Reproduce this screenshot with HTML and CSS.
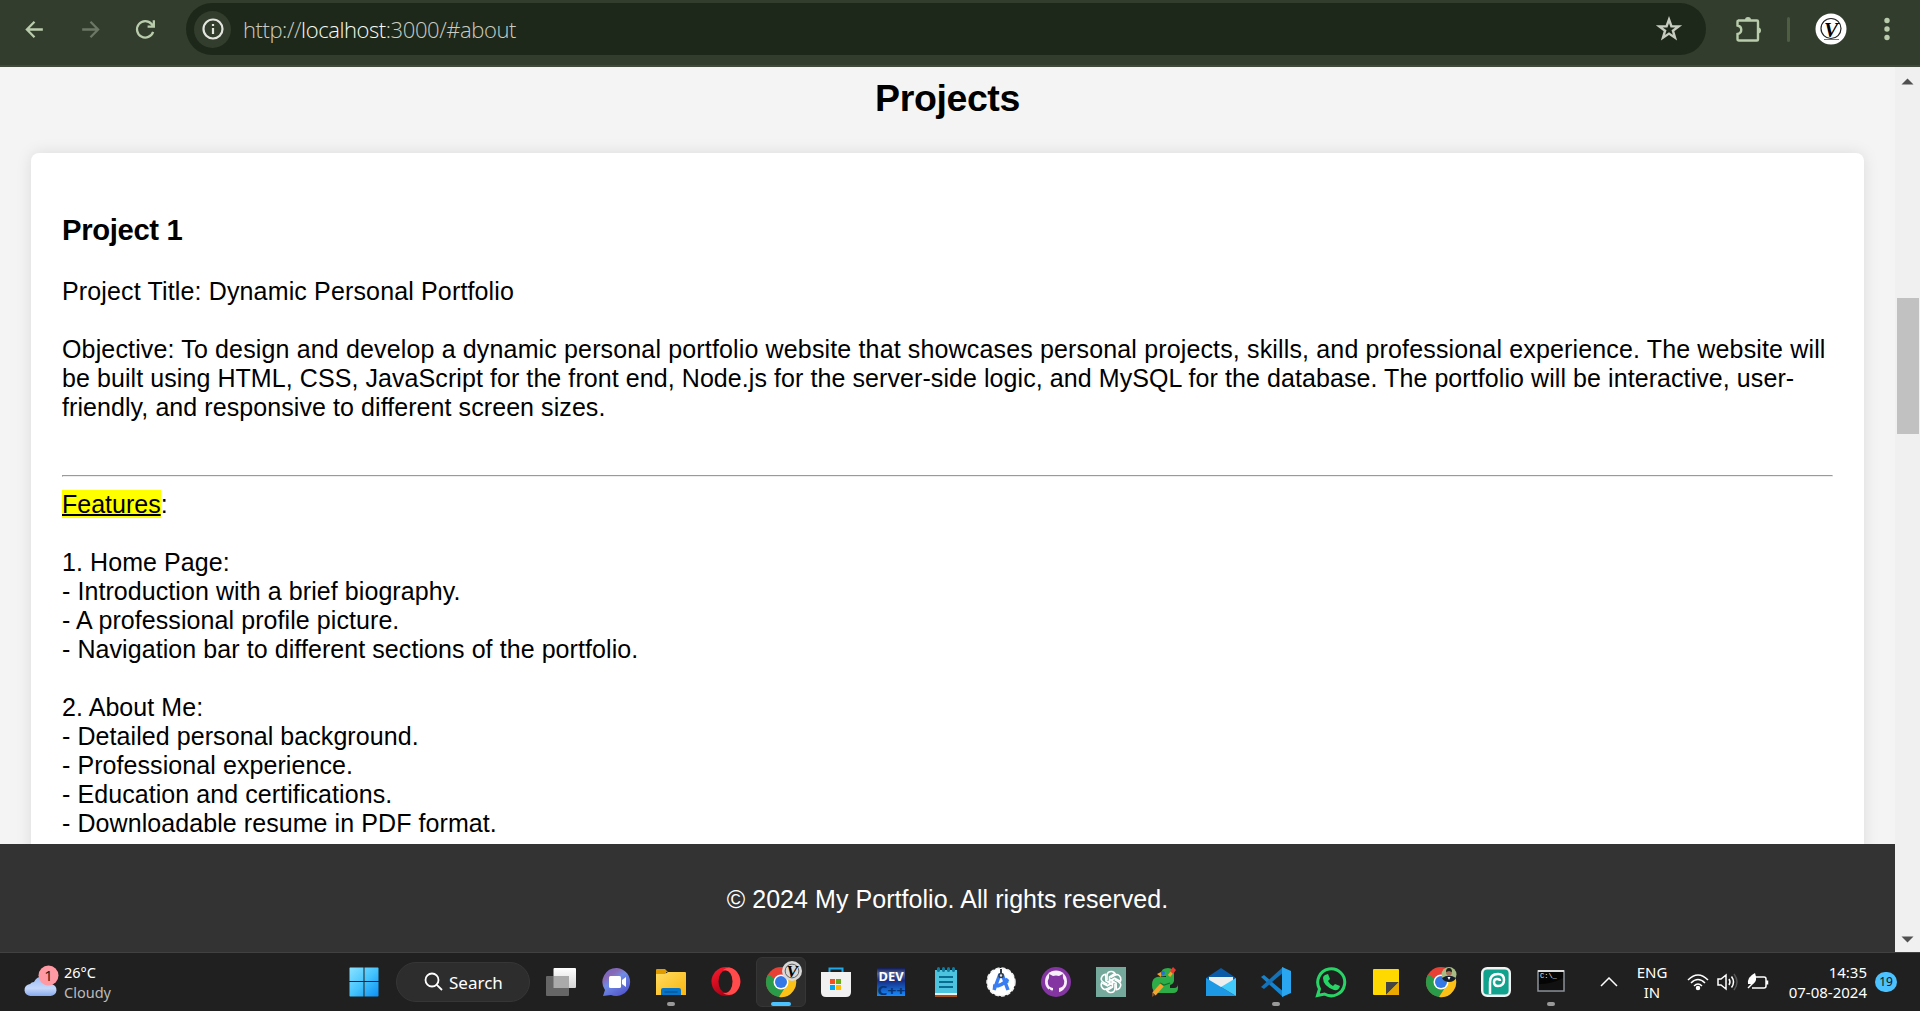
FILE: index.html
```html
<!DOCTYPE html>
<html lang="en">
<head>
<meta charset="utf-8">
<title>My Portfolio</title>
<link rel="stylesheet" href="styles.css">
</head>
<body>
<header class="toolbar">
  <svg class="nav" viewBox="0 0 24 24"><path d="M20 12H5M12 4.500 4.700 12 12 19.500"/></svg>
  <svg class="nav dim" viewBox="0 0 24 24"><path d="M4 12h15M12 4.500l7.300 7.500L12 19.500"/></svg>
  <svg class="nav" viewBox="0 0 24 24"><path d="M19.300 14.200A7.900 7.900 0 1 1 17.800 6.700L20 9M20 3.200V9.200H14"/></svg>
  <div class="omnibox">
    <span class="info"><svg width="24" height="24" viewBox="0 0 24 24"><circle cx="12" cy="12" r="9.500"/><path d="M12 11v6M12 7v2"/></svg></span>
    <span class="url"><span class="scheme">http://</span><span class="host">localhost</span><span class="path">:3000/#about</span></span>
    <svg class="star" width="28" height="28" viewBox="0 0 28 28"><path d="M14 4.500l2.400 6.700 7.300.2-5.800 4.300 2.100 7-6-4.100-6 4.100 2.100-7-5.800-4.300 7.300-.2z"/></svg>
  </div>
  <svg class="ext" width="28" height="28" viewBox="0 0 28 28"><path d="M4 5.500h19a1 1 0 0 1 1 1v18a1 1 0 0 1-1 1H5a1.500 1.500 0 0 1-1.500-1.500v-5c5-1 5-7.500 0-8.500v-4a1 1 0 0 1 1-1z"/><path class="knob" d="M11 5a3 3 0 0 1 6 0zM24 12.500a3 3 0 0 1 0 6z"/></svg>
  <span class="divider"></span>
  <svg class="avatar" width="32" height="32" viewBox="0 0 32 32"><circle cx="16" cy="16" r="15.500" fill="#fff"/><circle cx="16" cy="15.500" r="10" fill="none" stroke="#222" stroke-width="1.200"/><text x="16" y="24" text-anchor="middle">V</text><path d="M9 26.500h15" stroke="#777"/></svg>
  <svg class="dots" width="8" height="24" viewBox="0 0 8 24"><circle cx="4" cy="3.500" r="2.700"/><circle cx="4" cy="12" r="2.700"/><circle cx="4" cy="20.500" r="2.700"/></svg>
</header>
<div class="viewport">
  <div class="page">
    <main class="content">
      <h2>Projects</h2>
      <article class="card">
        <h3>Project 1</h3>
        <p><span class="wide">Project Title: Dynamic Personal Portfolio</span><br><br><span class="wide">Objective: To design and develop a dynamic personal portfolio website that showcases personal projects, skills, and professional experience. The website will</span><br>be built using HTML, CSS, JavaScript for the front end, Node.js for the server-side logic, and MySQL for the database. The portfolio will be interactive, user-<br>friendly, and responsive to different screen sizes.</p>
        <hr>
        <p><mark>Features</mark>:<br><br>1. Home Page:<br>- Introduction with a brief biography.<br>- A professional profile picture.<br>- Navigation bar to different sections of the portfolio.<br><br>2. About Me:<br>- Detailed personal background.<br>- Professional experience.<br>- Education and certifications.<br>- Downloadable resume in PDF format.</p>
      </article>
    </main>
    <footer>© 2024 My Portfolio. All rights reserved.</footer>
  </div>
  <aside class="scrollbar">
    <svg width="13" height="7" viewBox="0 0 13 7"><path d="M.5 6.500 6.500.5l6 6z"/></svg>
    <div class="thumb"></div>
    <svg width="13" height="7" viewBox="0 0 13 7"><path d="M.5.500l6 6 6-6z"/></svg>
  </aside>
</div>
<nav class="taskbar">
  <div class="weather">
    <svg width="36" height="34" viewBox="0 0 36 34">
      <defs><linearGradient id="cloud" x2="0" y2="1"><stop stop-color="#9bbcf5"/><stop offset=".6" stop-color="#c5d8fb"/><stop offset="1" stop-color="#86a9ec"/></linearGradient></defs>
      <path d="M7 31a6 6 0 0 1-1-12 5 5 0 0 1 4-2 9 9 0 0 1 17 2 6 6 0 0 1-1 12z" fill="url(#cloud)"/>
      <circle cx="24.500" cy="10.500" r="10" fill="#ff99a4"/><text x="24.500" y="15.500" text-anchor="middle">1</text>
    </svg>
    <div class="lines"><span class="temp">26°C</span><span class="cond">Cloudy</span></div>
  </div>
  <svg class="start" width="30" height="30" viewBox="0 0 30 30"><defs><linearGradient id="win" x2="1" y2="1"><stop stop-color="#8be3ff"/><stop offset=".5" stop-color="#45c4fd"/><stop offset="1" stop-color="#0b90f5"/></linearGradient></defs><path fill="url(#win)" d="M1 .5h13.500V14H.5V1zM15.500.5H29l.5.500v13h-14zM.5 15h14v14.500H1L.5 29zM15.500 15h14v14l-.5.500H15.500z"/></svg>
  <div class="search"><svg width="20" height="20" viewBox="0 0 20 20"><circle cx="8" cy="8" r="6.500"/><path d="M12.800 12.800 18 18"/></svg><span>Search</span></div>
  <div class="apps">
    <span class="app"><svg viewBox="0 0 32 32"><defs><linearGradient id="tv" x2="0" y2="1"><stop stop-color="#fff"/><stop offset="1" stop-color="#d5d5d5"/></linearGradient></defs><rect x="8.500" y="2" width="22.500" height="20" rx="1" fill="url(#tv)"/><rect x="1" y="10" width="23" height="20" rx="1" fill="#666"/><path d="M8.500 10H24v12H8.500z" fill="#aaa"/></svg></span>
    <span class="app"><svg viewBox="0 0 32 32"><defs><linearGradient id="chat" x2=".7" y2="1"><stop stop-color="#6168cf"/><stop offset=".3" stop-color="#8a68b4"/><stop offset=".5" stop-color="#6f8ce6"/><stop offset="1" stop-color="#5356cb"/></linearGradient></defs><path d="M17 2a14 14 0 1 1-6 27l-8 1 2-6A14 14 0 0 1 17 2z" fill="url(#chat)"/><rect x="9" y="10" width="12" height="12" rx="1.500" fill="#fff"/><path d="M22 14l4-3v10l-4-3z" fill="#fff"/></svg></span>
    <span class="app open"><svg viewBox="0 0 32 32"><defs><linearGradient id="fold" x2="1" y2="1"><stop stop-color="#ffdb62"/><stop offset="1" stop-color="#f9b60c"/></linearGradient></defs><path d="M1 4q0-1 1-1h8l3 3h-2v5H1z" fill="#df9b00"/><path d="M1 8h9l3-2h17q1 0 1 1v22H1z" fill="url(#fold)"/><path d="M6 29v-5q0-2 2-2h16q2 0 2 2v5z" fill="#0874c8"/><path d="M9.500 26h13" stroke="#034a83"/></svg></span>
    <span class="app"><svg viewBox="0 0 32 32"><defs><linearGradient id="op" x2=".5" y2="1"><stop stop-color="#ff1b2d"/><stop offset="1" stop-color="#a70014"/></linearGradient></defs><circle cx="16" cy="15.500" r="14.500" fill="url(#op)"/><path d="M13 4q6-5 12 0a15 15 0 0 1 0 23q-6 4-12 0 9 1 9-12Q22 4 13 4z" fill="#ff4b4b"/><ellipse cx="15.500" cy="15.500" rx="7" ry="11" fill="#202020"/></svg></span>
    <span class="app active"><svg viewBox="0 0 32 32"><g id="chrome"><circle cx="16" cy="16" r="15" fill="#e74034"/><path d="M16 16 3 8.500A15 15 0 0 0 14 31l6-9z" fill="#299b49"/><path d="M16 9h13.300A15 15 0 0 1 14 31l7-11z" fill="#fbc116"/><circle cx="16" cy="16" r="7.500" fill="#fff"/><circle cx="16" cy="16" r="6" fill="#3478e5"/></g></svg><svg class="profile" viewBox="0 0 32 32"><circle cx="16" cy="16" r="16" fill="#d8d8d8"/><circle cx="16" cy="16" r="11" fill="none" stroke="#555" stroke-width="1.500"/><text x="16" y="25" text-anchor="middle">V</text></svg></span>
    <span class="app"><svg viewBox="0 0 32 32"><path d="M9.500 8V2.500h13V8" fill="none" stroke="#21a8e8" stroke-width="2"/><path d="M1 6h30v20q0 5-5 5H6q-5 0-5-5z" fill="#f1f1f1"/><path d="M10 13h5v5h-5z" fill="#f25022"/><path d="M16 13h5v5h-5z" fill="#68ad16"/><path d="M10 19h5v5h-5z" fill="#00a4ef"/><path d="M16 19h5v5h-5z" fill="#ffb900"/></svg></span>
    <span class="app"><svg class="dev" viewBox="0 0 32 32"><defs><linearGradient id="dev" x2="0" y2="1"><stop stop-color="#101b56"/><stop offset=".2" stop-color="#526599"/><stop offset=".45" stop-color="#172c83"/><stop offset="1" stop-color="#168cff"/></linearGradient></defs><path d="M2 2h28v28H2z" fill="url(#dev)"/><text x="3.500" y="14.500" textLength="25" lengthAdjust="spacingAndGlyphs" fill="#fff">DEV</text><text x="2.500" y="28.500" textLength="28" lengthAdjust="spacingAndGlyphs" fill="#063474">C++</text></svg></span>
    <span class="app"><svg viewBox="0 0 32 32"><path d="M5 4h22v25H5z" fill="#4dc4df"/><path d="M5 27h22v2H5z" fill="#eee"/><path d="M5 29h22v2H5z" fill="#a34f18"/><path d="M9 11h14M9 16h14M9 21h14" stroke="#086d91" stroke-width="2"/><path d="M8.500 2.500v2M13.500 2.500v2M18.500 2.500v2M23.500 2.500v2" stroke="#137a9b" stroke-width="3" stroke-linecap="round"/></svg></span>
    <span class="app"><svg viewBox="0 0 32 32"><circle cx="16" cy="16" r="14" fill="#fff" stroke="#eee" stroke-width="1.500" stroke-dasharray="4 2"/><path d="M20 12l4 4-4 3z" fill="#29a854"/><path d="M15 8 9 24M17 8l6 16M8 20q8 1 15-7" fill="none" stroke="#387df1" stroke-width="3.500"/><circle cx="16" cy="9.500" r="2" fill="#ddd" stroke="#303c4c" stroke-width="1.500"/><path d="M16 3v4" stroke="#303c4c" stroke-width="2"/></svg></span>
    <span class="app"><svg viewBox="0 0 32 32"><circle cx="16" cy="16" r="15" fill="#8435a1"/><circle cx="16" cy="15.500" r="11" fill="#f6effa"/><path d="M13 28v-6q-4-.5-5-4-1-3 1-6l.2-4 3.800 2q3-1 6 0l3.800-2 .2 4q2 3 1 6-1 3.500-5 4v6z" fill="#8435a1"/><path d="M13 25q-3 .8-4-2" fill="none" stroke="#8435a1" stroke-width="1.500"/></svg></span>
    <span class="app"><svg viewBox="0 0 32 32"><path d="M1 1h30v30H1z" fill="#74a99b"/><g transform="translate(16 16)" fill="none" stroke="#fff" stroke-width="1.600"><g id="petals"><path id="petal" d="M-4-1.800V-6Q-4-11 1-10.500 3-10 4-8.500L-1.500-5V3"/><use href="#petal" transform="rotate(60)"/><use href="#petal" transform="rotate(120)"/></g><use href="#petals" transform="rotate(180)"/></g></svg></span>
    <span class="app"><svg viewBox="0 0 32 32"><path d="M11 8q0-6 7-6 6 0 6 6v7q-1 4-5 4h-7q-2 1-2 3h14q4 0 4-4v4q0 5-5 5H7q-5-1-5-8 0-7 5-8 4-1 9 0v-1h-5z" fill="#2eac48"/><path d="M10 15h10v9H10z" fill="#2eac48"/><path d="m7 8 4-2v5z" fill="#f0a02c"/><path d="m10 17 4 2 6-2" stroke="#13702d" stroke-width="1.200" fill="none"/><circle cx="13" cy="7" r="2" fill="#246fdd"/><path d="m19 10 4-5" stroke="#f6a42c" stroke-width="3"/><path d="M4 28l8-9" stroke="#f6a42c" stroke-width="4.500"/><path d="m20 5 3-4 3 3-3 4z" fill="#e63a31"/><path d="m2 26 3 3-3 2z" fill="#79502e"/></svg></span>
    <span class="app"><svg viewBox="0 0 32 32"><path d="M1 12 16 2l15 10v6H1z" fill="#0b5aa8"/><path d="M4 11h24v10H4z" fill="#eee"/><path d="M1 12v18h30L16 21z" fill="#1c98e4"/><path d="M31 12v18L16 21z" fill="#42cafa"/></svg></span>
    <span class="app open"><svg viewBox="0 0 32 32"><path d="M1 11l3-2 21 18-2 4z" fill="#1683ce"/><path d="M1 21l3 2L25 5l-2-4z" fill="#1372b8"/><path d="M22 1 31 5v22l-9 4z" fill="#29a6ef"/></svg></span>
    <span class="app"><svg viewBox="0 0 32 32"><path d="M2.500 29.500 4.500 23A13.500 13.500 0 1 1 9.500 28z" fill="none" stroke="#28d466" stroke-width="3"/><path d="M10 9l3-1 2 5-2 2q2 4 5 5l2-2 5 2q-1 5-6 4Q8 20 8 12q0-2 2-3z" fill="#28d466"/></svg></span>
    <span class="app"><svg viewBox="0 0 32 32"><rect x="3" y="3" width="26" height="26" rx="1" fill="#ffd900"/><path d="M16 16h13L16 29z" fill="#444"/><path d="M29 16v13H16z" fill="#eba900"/></svg></span>
    <span class="app"><svg viewBox="0 0 32 32"><use href="#chrome"/><circle cx="24" cy="8.500" r="7.500" fill="#a7bd84"/><path d="M17 12q7-5 14 0-2 4-7 4t-7-4z" fill="#151e2c"/><circle cx="24" cy="6.500" r="3" fill="#a7735a"/><path d="M21 6q0-4 3-4t3 4l-3-1z" fill="#182018"/><path d="m22.500 11 1.500 3 1.500-3z" fill="#fff"/></svg></span>
    <span class="app"><svg viewBox="0 0 32 32"><rect x="2.200" y="2.200" width="27.600" height="27.600" rx="5" fill="#10a28c" stroke="#f3f3f3" stroke-width="2.400"/><path d="M10 28V16q0-8 8-8 6 0 6 6t-6 6q-4 0-4-4 0-3 3-3 3 0 3 2" fill="none" stroke="#fff" stroke-width="2.500"/></svg></span>
    <span class="app open"><svg class="cmd" viewBox="0 0 32 32"><path d="M3 5h26v20H3z" fill="#050505" stroke="#8c939b" stroke-width="1.500"/><path d="M3 5h26" stroke="#ddd" stroke-width="2"/><text x="5" y="12">C:\_</text><path d="M4 18q13 0 24-6v12H4z" fill="#222" opacity=".4"/></svg></span>
  </div>
  <div class="tray">
    <svg class="chev" width="18" height="10" viewBox="0 0 18 10"><path d="m1 9 8-8 8 8"/></svg>
    <div class="lang"><span>ENG</span><span>IN</span></div>
    <svg class="wifi" width="22" height="18" viewBox="0 0 22 18"><path d="M1 7q10-10 20 0M4 10q7-7 14 0M7 13q4-4 8 0"/><circle cx="11" cy="15" r="1.500" fill="#fff"/></svg>
    <svg class="sound" width="21" height="18" viewBox="0 0 21 18"><path d="M1 6h3l5-4v14l-5-4H1zM12 6q2 3 0 6M14.500 3.500q4 5.500 0 11"/><path d="M17 1q6 8 0 16" stroke="#555"/></svg>
    <svg class="battery" width="22" height="18" viewBox="0 0 22 18"><path d="M8 4h9q2 0 2 2v7q0 2-2 2H5M20.500 7.500v4"/><path d="M8 0Q11 8 6 11H1Q0 4 8 0z" fill="#fff" stroke="none"/><path d="M1 15 6 10"/></svg>
    <div class="clock"><span>14:35</span><span>07-08-2024</span></div>
    <span class="count">19</span>
  </div>
</nav>
</body>
</html>
```
FILE: styles.css
```css
* { box-sizing: border-box; }
body { margin: 0; width: 1920px; height: 1011px; overflow: hidden; display: grid; grid-template-rows: 67px 885px 59px; font-family: "Liberation Sans", Arial, sans-serif; color: #000; }
svg { display: block; flex: none; }

.toolbar { background: #323d2d; border-bottom: 2px solid #41493d; display: flex; padding: 3px 0 10px 22px; align-items: center; }
.nav { width: 25px; height: 27px; margin-right: 31px; fill: none; stroke: #b9ccac; stroke-width: 2.200; }
.nav.dim { stroke: #6c7765; margin-right: 30px; }
.nav + .nav + .nav { margin-right: 28px; }
.omnibox { width: 1520px; height: 52px; border-radius: 26px; background: #1e281a; display: flex; align-items: center; padding: 0 23px 0 8px; }
.info { width: 37px; height: 37px; border-radius: 50%; background: #323d2d; display: grid; place-items: center; }
.info svg { fill: none; stroke: #e3e5df; stroke-width: 2.200; }
.url { margin-left: 12px; font: 300 22px/30px "Open Sans", "Noto Sans", sans-serif; letter-spacing: -.42px; color: #c9cdc2; white-space: nowrap; flex: 1; }
.host { color: #f8fbf2; }
.star { fill: none; stroke: #c7ccc0; stroke-width: 2.400; }
.ext { margin-left: 28px; fill: none; stroke: #b9ccac; stroke-width: 2.400; }
.ext .knob { fill: #b9ccac; stroke: none; }
.divider { width: 3px; height: 25px; margin-left: 25px; border-radius: 2px; background: #4d5e43; }
.avatar { margin-left: 25px; }
.avatar text { font: italic bold 21px "Liberation Serif", serif; }
.dots { margin-left: 36px; fill: #b9ccac; }

.viewport { display: flex; min-height: 0; }
.page { width: 1895px; display: flex; flex-direction: column; }
.content { height: 777px; overflow: hidden; background: #f4f4f4; padding: 10px 31px 0; }
h2 { margin: 0 0 33px; font-size: 37.500px; line-height: 43px; letter-spacing: -.4px; text-align: center; }
.card { height: 760px; background: #fff; border-radius: 8px; padding: 60px 31px 0; box-shadow: 0 0 15.600px rgba(0,0,0,.1); }
h3 { margin: 0 0 30px; font-size: 29.250px; line-height: 34px; letter-spacing: -.35px; }
.card p { margin: 0; font-size: 25px; line-height: 29px; letter-spacing: .075px; white-space: nowrap; }
.card .wide { letter-spacing: .148px; }
hr { margin: 53px 0 13px; border: 1px solid; border-color: #9a9a9a #eee #eee #9a9a9a; }
mark { background: #ff0; color: #000; text-decoration: underline; text-decoration-thickness: 2px; letter-spacing: 0; }
footer { flex: 1; background: #333; color: #fff; font-size: 25px; line-height: 29px; letter-spacing: .05px; display: grid; place-items: center; padding-top: 3px; }
.scrollbar { width: 25px; background: #f0f0f0; display: flex; flex-direction: column; align-items: center; padding: 11px 0 9px; fill: #505050; }
.thumb { width: 22px; height: 136px; margin: 213px 0 auto 1px; background: #c1c1c1; }

.taskbar { background: #202020; border-top: 1px solid #414141; display: flex; align-items: center; color: #fff; font-family: "Noto Sans", sans-serif; }
.weather { width: 349px; display: flex; padding-left: 24px; gap: 4px; align-items: center; }
.weather svg text { font: 15px "Noto Sans", sans-serif; fill: #222; }
.lines { display: flex; flex-direction: column; font-size: 14.500px; line-height: 20px; }
.cond { color: #bbb; }
.search { width: 134px; height: 40px; margin-left: 17px; border: 1px solid #363636; border-radius: 20px; background: #2d2d2d; display: flex; align-items: center; padding-left: 27px; gap: 5px; font-size: 17px; }
.search svg { fill: none; stroke: #fff; stroke-width: 1.800; }
.apps { margin-left: 3px; display: grid; grid-template-columns: repeat(19, 55px); align-items: center; }
.app { position: relative; width: 50px; height: 50px; margin: 0 auto; display: grid; place-items: center; border-radius: 6px; }
.app > svg { width: 32px; height: 32px; }
.app.active { background: #2d2d2d; border: 1px solid #363636; }
.app.open::after, .app.active::after { content: ""; position: absolute; bottom: 1px; left: 21px; width: 8px; height: 4px; border-radius: 2px; background: #999; }
.app.active::after { width: 20px; left: 14px; bottom: 0; background: #4cc2ff; }
.app .profile { position: absolute; width: 20px; height: 20px; top: 3px; right: 3px; }
.profile text { font: italic bold 27px "Liberation Serif", serif; }
.dev text { font: bold 13px "Noto Sans", sans-serif; }
.cmd text { font: 7px "Liberation Mono", monospace; fill: #eee; }
.tray { flex: 1; display: flex; align-items: center; font-size: 15px; line-height: 20px; }
.tray svg { fill: none; stroke: #fff; stroke-width: 1.500; }
.chev { margin-left: 22px; }
.lang { width: 40px; margin-left: 14px; text-align: center; }
.lang, .clock { display: flex; flex-direction: column; }
.wifi { margin-left: 15px; }
.sound { margin-left: 8px; }
.battery { margin-left: 9px; }
.clock { width: 88px; margin-left: 10px; text-align: right; }
.clock span { white-space: nowrap; align-self: flex-end; }
.count { width: 22px; height: 20px; margin-left: 8px; border-radius: 11px; background: #4cc2ff; color: #111; font-size: 12px; text-align: center; }
```
